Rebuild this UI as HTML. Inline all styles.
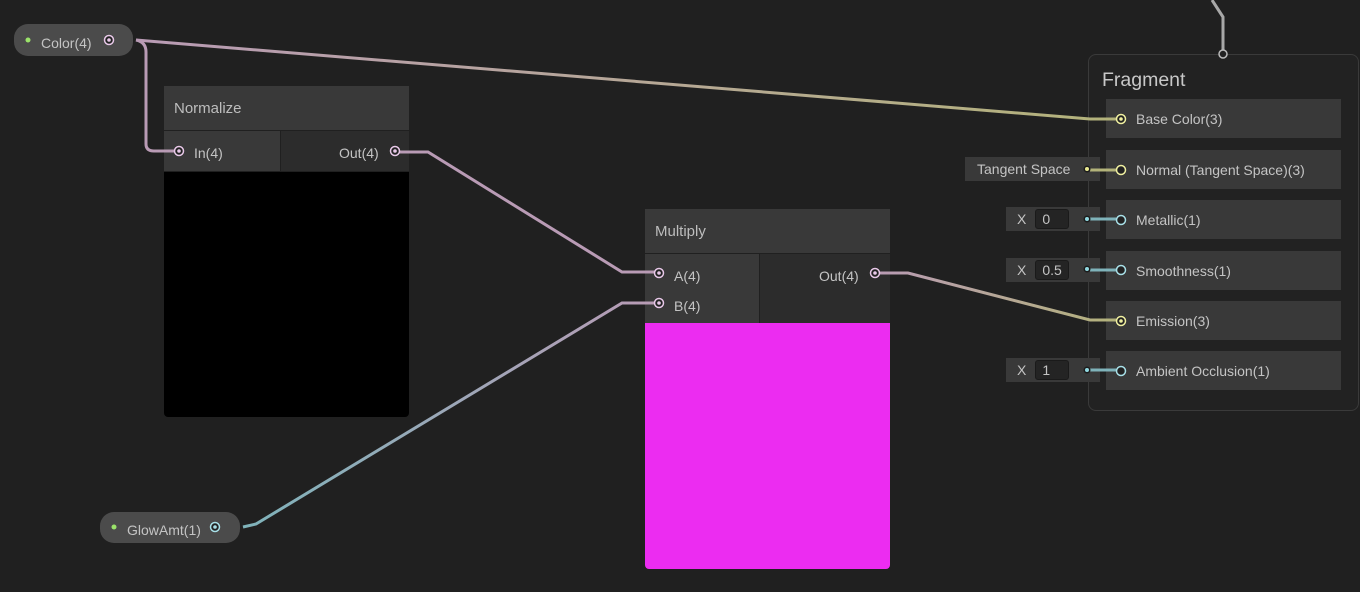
<!DOCTYPE html>
<html><head><style>
body{margin:0;width:1360px;height:592px;background:#202020;overflow:hidden;position:relative;font-family:"Liberation Sans",sans-serif;color:#c4c4c4;font-size:14px}
.a{position:absolute;box-sizing:border-box}
.hdr{background:#393939;color:#bdbdbd;font-size:15px;padding-left:10px;display:flex;align-items:center}
.lt{background:#393939}.dk{background:#2c2c2c}
.pill{background:#4b4b4b;border-radius:14px}
.row{background:#393939;left:1106px;width:235px;height:39px;padding-left:30px;display:flex;align-items:center;font-size:14px}
.inbox{background:#393939;height:24px;display:flex;align-items:center;font-size:14px}
.fld{background:#242424;border:1px solid #1a1a1a;border-radius:3px;height:20px;width:34px;padding-left:6px;display:flex;align-items:center;box-sizing:border-box}
</style></head><body>
<!-- Normalize -->
<div class="a hdr" style="left:164px;top:86px;width:245px;height:44px">Normalize</div>
<div class="a lt" style="left:164px;top:131px;width:116px;height:40px"></div>
<div class="a dk" style="left:281px;top:131px;width:128px;height:40px"></div>
<div class="a" style="left:194px;top:145px">In(4)</div>
<div class="a" style="left:339px;top:145px">Out(4)</div>
<div class="a" style="left:164px;top:172px;width:245px;height:245px;background:#000;border-radius:0 0 4px 4px"></div>
<!-- Multiply -->
<div class="a hdr" style="left:645px;top:209px;width:245px;height:44px">Multiply</div>
<div class="a lt" style="left:645px;top:254px;width:114px;height:69px"></div>
<div class="a dk" style="left:760px;top:254px;width:130px;height:69px"></div>
<div class="a" style="left:674px;top:268px">A(4)</div>
<div class="a" style="left:674px;top:298px">B(4)</div>
<div class="a" style="left:819px;top:268px">Out(4)</div>
<div class="a" style="left:645px;top:323px;width:245px;height:246px;background:#ec2cf1;border-radius:0 0 4px 4px"></div>
<!-- Pills -->
<div class="a pill" style="left:14px;top:24px;width:119px;height:32px"></div>
<div class="a" style="left:41px;top:35px">Color(4)</div>
<div class="a pill" style="left:100px;top:512px;width:140px;height:31px"></div>
<div class="a" style="left:127px;top:522px">GlowAmt(1)</div>
<!-- Fragment -->
<div class="a" style="left:1088px;top:54px;width:271px;height:357px;background:#222;border:1px solid #3a3a3a;border-radius:8px"></div>
<div class="a" style="left:1102px;top:69px;font-size:19.5px;color:#c8c8c8">Fragment</div>
<div class="a row" style="top:99px">Base Color(3)</div>
<div class="a row" style="top:150px">Normal (Tangent Space)(3)</div>
<div class="a row" style="top:200px">Metallic(1)</div>
<div class="a row" style="top:251px">Smoothness(1)</div>
<div class="a row" style="top:301px">Emission(3)</div>
<div class="a row" style="top:351px">Ambient Occlusion(1)</div>
<div class="a inbox" style="left:965px;top:157px;width:135px;padding-left:12px">Tangent Space</div>
<div class="a inbox" style="left:1006px;top:207px;width:94px;padding-left:11px">X<div class="fld" style="margin-left:9px">0</div></div>
<div class="a inbox" style="left:1006px;top:258px;width:94px;padding-left:11px">X<div class="fld" style="margin-left:9px">0.5</div></div>
<div class="a inbox" style="left:1006px;top:358px;width:94px;padding-left:11px">X<div class="fld" style="margin-left:9px">1</div></div>
<svg class="a" style="left:0;top:0" width="1360" height="592">
<defs>
<linearGradient id="g1" x1="136" y1="0" x2="1120" y2="0" gradientUnits="userSpaceOnUse"><stop offset="0" stop-color="#b99bb5"/><stop offset="1" stop-color="#b3b37a"/></linearGradient>
<linearGradient id="g2" x1="245" y1="0" x2="658" y2="0" gradientUnits="userSpaceOnUse"><stop offset="0" stop-color="#7fb3ba"/><stop offset="1" stop-color="#b99bb5"/></linearGradient>
<linearGradient id="g3" x1="875" y1="0" x2="1120" y2="0" gradientUnits="userSpaceOnUse"><stop offset="0" stop-color="#b99bb5"/><stop offset="1" stop-color="#b3b37a"/></linearGradient>
</defs>
<g fill="none" stroke-width="3">
<path d="M136 40 L1090 119 L1116 119" stroke="url(#g1)"/>
<path d="M136 40 Q146 42 146 52 L146 144 Q146 151 154 151 L174 151" stroke="#b99bb5"/>
<path d="M398 152 L428 152 L622 272 L658 272" stroke="#b99bb5"/>
<path d="M243 527 L256 524 L622 303 L658 303" stroke="url(#g2)"/>
<path d="M878 273 L908 273 L1090 320 L1116 320" stroke="url(#g3)"/>
<path d="M1212 0 L1223 17 L1223 50" stroke="#a8a8a8"/>
<path d="M1090 170 L1116 170" stroke="#b3b37a"/>
<path d="M1090 219 L1116 219 M1090 270 L1116 270 M1090 370 L1116 370" stroke="#7fb3ba"/>
</g>
<g stroke-width="1.5" fill="#222">
<circle cx="1223" cy="54" r="4" stroke="#bbb"/>
<circle cx="109" cy="40" r="4.5" stroke="#e8c8e8"/><circle cx="109" cy="40" r="1.8" fill="#e8c8e8"/>
<circle cx="179" cy="151" r="4.5" stroke="#e8c8e8"/><circle cx="179" cy="151" r="1.8" fill="#e8c8e8"/>
<circle cx="395" cy="151" r="4.5" stroke="#e8c8e8"/><circle cx="395" cy="151" r="1.8" fill="#e8c8e8"/>
<circle cx="659" cy="273" r="4.5" stroke="#e8c8e8"/><circle cx="659" cy="273" r="1.8" fill="#e8c8e8"/>
<circle cx="659" cy="303" r="4.5" stroke="#e8c8e8"/><circle cx="659" cy="303" r="1.8" fill="#e8c8e8"/>
<circle cx="875" cy="273" r="4.5" stroke="#e8c8e8"/><circle cx="875" cy="273" r="1.8" fill="#e8c8e8"/>
<circle cx="215" cy="527" r="4.5" stroke="#a8e0e8"/><circle cx="215" cy="527" r="1.8" fill="#a8e0e8"/>
<circle cx="1121" cy="119" r="4.5" stroke="#f0f0a0"/><circle cx="1121" cy="119" r="1.8" fill="#f0f0a0"/>
<circle cx="1121" cy="321" r="4.5" stroke="#f0f0a0"/><circle cx="1121" cy="321" r="1.8" fill="#f0f0a0"/>
<circle cx="1121" cy="170" r="4.5" stroke="#f0f0a0"/>
<circle cx="1121" cy="220" r="4.5" stroke="#a8e0e8"/>
<circle cx="1121" cy="270" r="4.5" stroke="#a8e0e8"/>
<circle cx="1121" cy="371" r="4.5" stroke="#a8e0e8"/>
</g>
<g>
<circle cx="28" cy="40" r="2.5" fill="#9be36a"/><circle cx="114" cy="527" r="2.5" fill="#9be36a"/>
<circle cx="1087" cy="169" r="3.5" fill="#1c1c1c"/><circle cx="1087" cy="169" r="2" fill="#e8e890"/>
<circle cx="1087" cy="219" r="3.5" fill="#1c1c1c"/><circle cx="1087" cy="219" r="2" fill="#90d8e0"/>
<circle cx="1087" cy="269" r="3.5" fill="#1c1c1c"/><circle cx="1087" cy="269" r="2" fill="#90d8e0"/>
<circle cx="1087" cy="370" r="3.5" fill="#1c1c1c"/><circle cx="1087" cy="370" r="2" fill="#90d8e0"/>
</g>
</svg>
</body></html>
